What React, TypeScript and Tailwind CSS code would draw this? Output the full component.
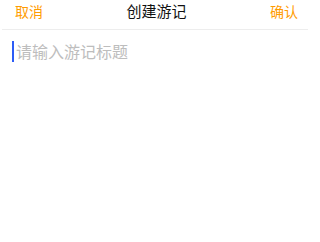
export default function App() {
  return (
    <div
      className="w-[310px] h-[242px] bg-white overflow-hidden"
      style={{ fontFamily: '"Noto Sans CJK SC", "Noto Sans", sans-serif' }}
    >
      <div className="relative flex items-start justify-between h-[29px] pt-[1px] pl-[15px] pr-[12px]">
        <span className="text-[14px] leading-[20px] text-[#ff9c00]">取消</span>
        <span className="text-[15px] leading-[20px] text-[#111111]">创建游记</span>
        <span className="text-[14px] leading-[20px] text-[#ff9c00]">确认</span>
      </div>
      <div className="mx-[2px] h-px bg-[#ededed]" />
      <div className="flex items-center mt-[11px] pl-[12px]">
        <div className="w-[2px] h-[21px] bg-[#2d5cf6]" />
        <span className="ml-[2px] text-[16px] leading-[21px] text-[#bdbdbd]">请输入游记标题</span>
      </div>
    </div>
  );
}
